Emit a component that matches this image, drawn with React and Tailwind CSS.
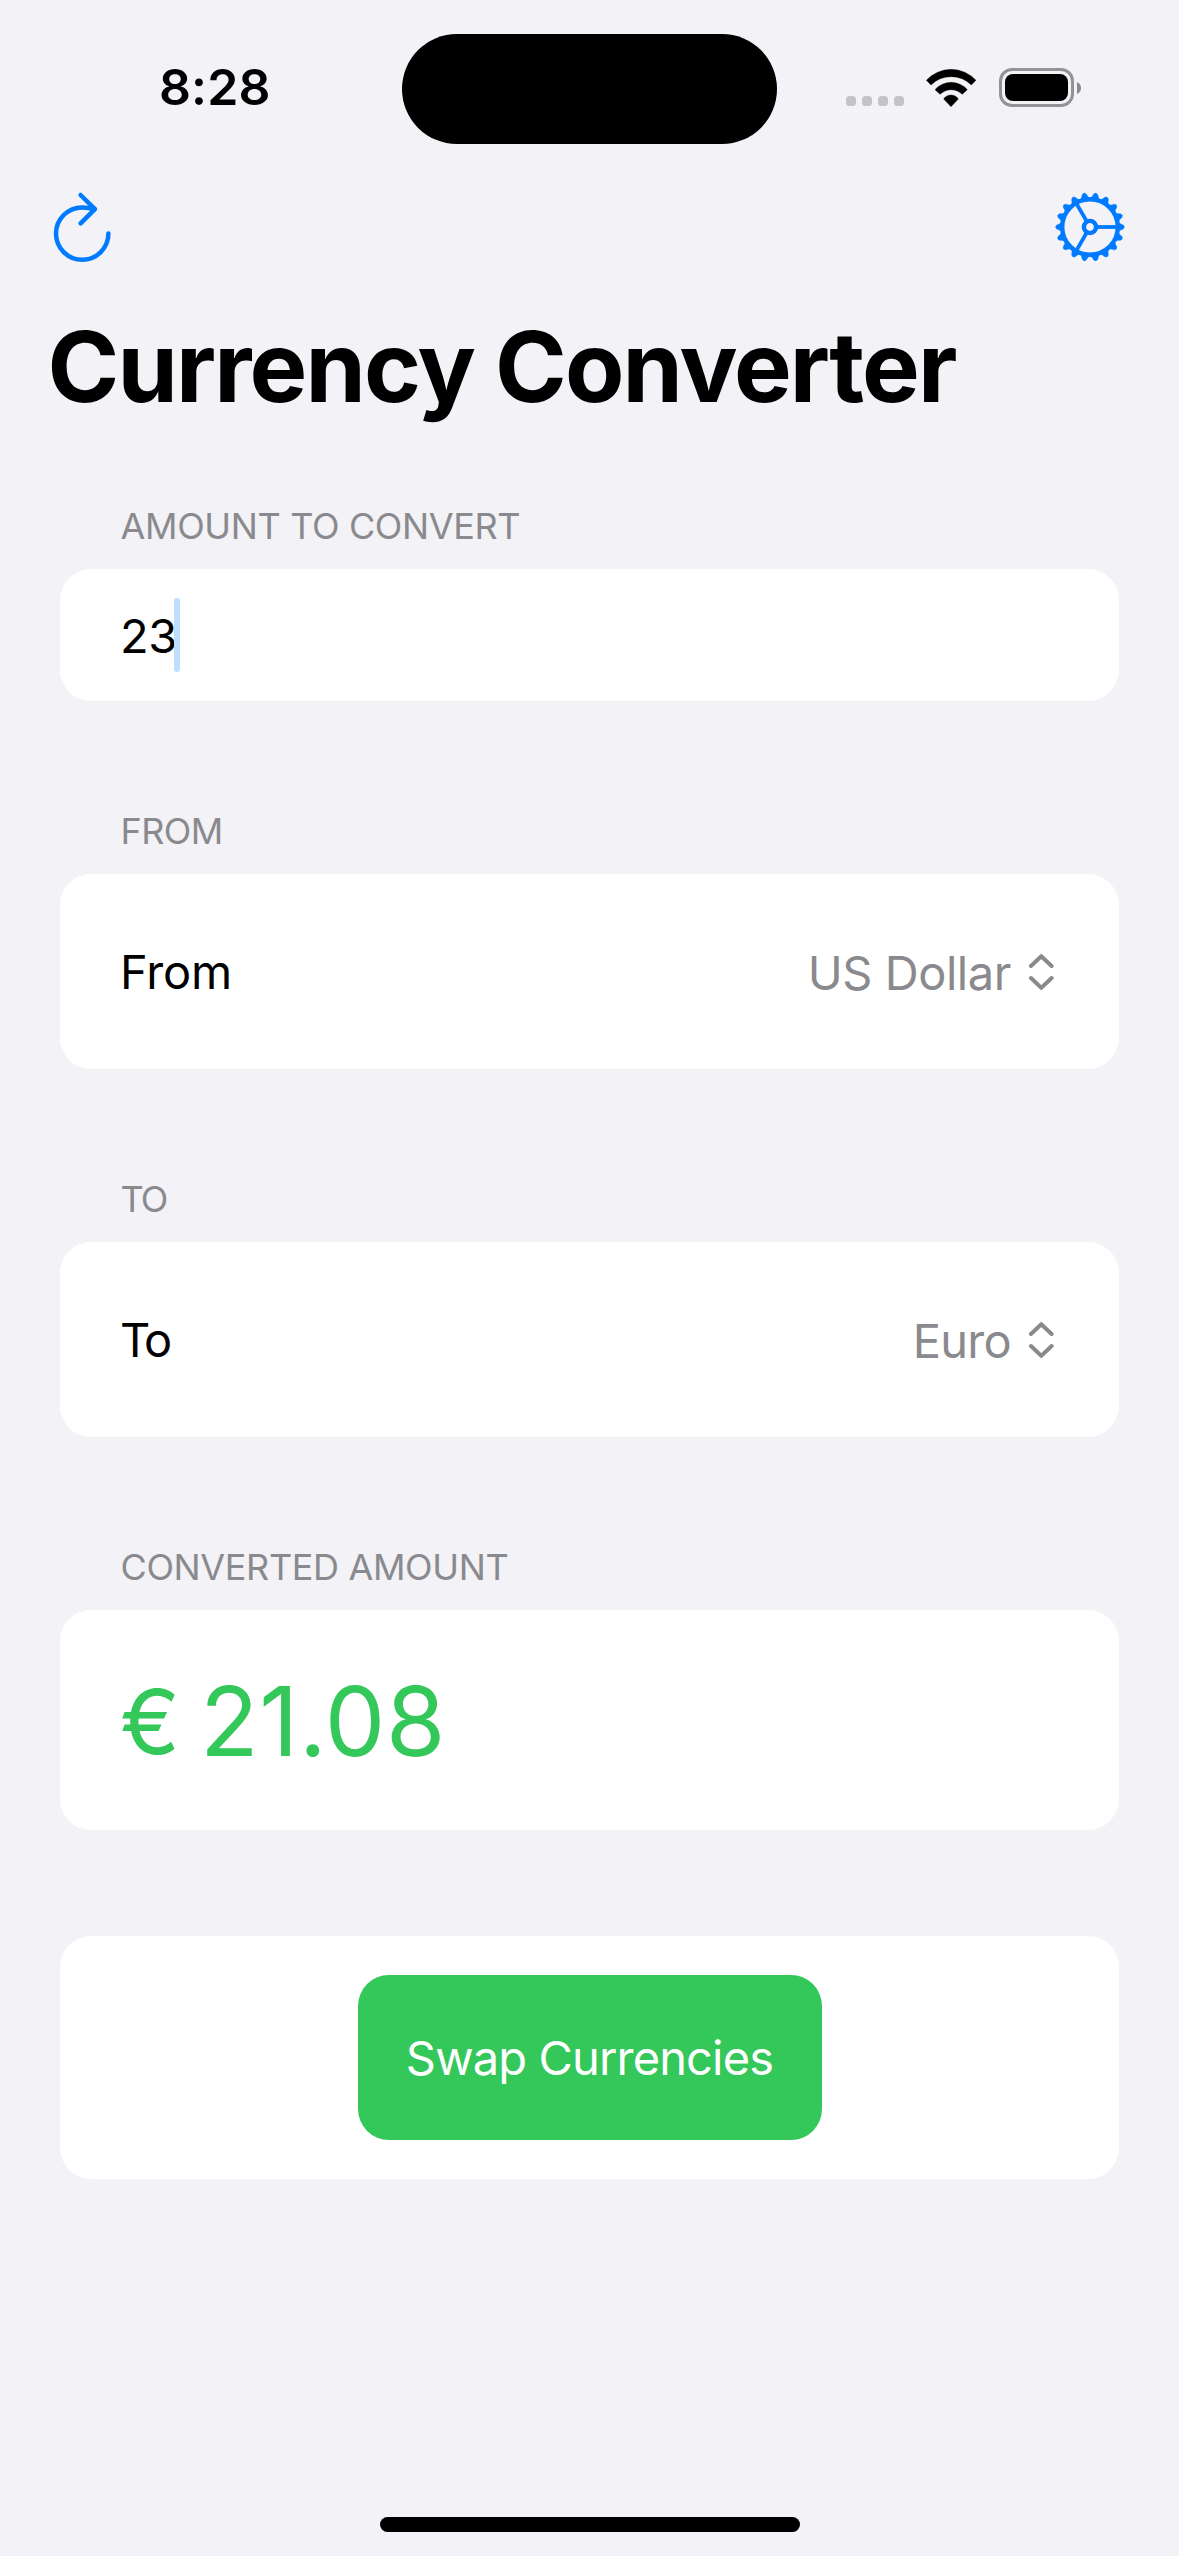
import React from 'react';

const TEETH = Array.from({ length: 18 }, (_, i) => i * 20);

function RefreshIcon() {
  return (
    <svg className="block h-[84px] w-[72px]" viewBox="48 186 72 84" fill="none" stroke="#007aff" strokeWidth="4.5" strokeLinecap="round" strokeLinejoin="round">
      <path d="M108.4 233.5A26.2 26.2 0 1 1 82.3 207.4Q88.5 207.4 94.6 209.1" />
      <path d="M80.6 195L94.9 209.2L80.6 223.3" />
    </svg>
  );
}

function GearIcon() {
  return (
    <svg className="block h-[72px] w-[72px]" viewBox="-36 -36 72 72" fill="none" stroke="#007aff">
      <circle r="27.8" strokeWidth="4.4" />
      <circle r="6.1" strokeWidth="4.4" />
      {[0, 120, 240].map((a) => (
        <path key={a} d="M7 0H27" strokeWidth="3.8" transform={`rotate(${a})`} />
      ))}
      {TEETH.map((a) => (
        <path key={a} d="M28.8 -4L33.2 -2Q35.6 0 33.2 2L28.8 4Z" fill="#007aff" strokeWidth="0.4" transform={`rotate(${a})`} />
      ))}
    </svg>
  );
}

function WifiIcon() {
  return (
    <svg className="block h-[38px] w-[50px]" viewBox="319 85 150 114" fill="#000">
      <path d="M320 119A100.6 100.6 0 0 1 469 119L455 133A85.7 85.7 0 0 0 334 133Z" stroke="#000" strokeWidth="1" strokeLinejoin="round" />
      <path d="M346 147A64.5 64.5 0 0 1 443 147L428 161A47 47 0 0 0 361 161Z" stroke="#000" strokeWidth="1" strokeLinejoin="round" />
      <path d="M372 175A26 26 0 0 1 416 175L394 198Z" stroke="#000" strokeWidth="1" strokeLinejoin="round" />
    </svg>
  );
}

function UpDownIcon() {
  return (
    <svg className="block h-[38px] w-[26px]" viewBox="1028 952 26 38" fill="none" stroke="#8a8a8e" strokeWidth="4" strokeLinecap="round" strokeLinejoin="round">
      <path d="M1031 965L1041.3 955.2L1051.6 965" />
      <path d="M1031 977L1041.3 986.9L1051.6 977" />
    </svg>
  );
}

function StatusBar() {
  return (
    <header className="flex h-[177px] items-start">
      <div className="mt-[57px] ml-[159px] w-[243px] text-[50px] leading-[60px] font-semibold tracking-[0.1px]">8:28</div>
      <div className="mt-[33.5px] h-[110.5px] w-[375px] rounded-full bg-black" />
      <div className="mt-[96px] ml-[69px] flex gap-[6px]">
        {[0, 1, 2, 3].map((i) => (
          <span key={i} className="size-[10px] rounded-[3.5px] bg-[#c4c3c8]" />
        ))}
      </div>
      <div className="mt-[68.5px] ml-[22px]">
        <WifiIcon />
      </div>
      <div className="mt-[68px] ml-[23px] flex items-center gap-[3px]">
        <div className="h-[39px] w-[75px] rounded-[13px] border-[3px] border-[#939297] p-[3px]">
          <div className="h-full rounded-[8px] bg-black" />
        </div>
        <svg className="h-3 w-1" viewBox="0 0 4 12" fill="#8b8b8f">
          <path d="M0 0Q4 2 4 6T0 12Z" />
        </svg>
      </div>
    </header>
  );
}

function SectionHeader({ children, className = '' }) {
  return (
    <h2 className={`mb-[16px] pl-[60.5px] text-[36px] leading-[54px] tracking-[-0.36px] text-[#8a8a8e] ${className}`}>{children}</h2>
  );
}

function PickerRow({ label, value, labelClass, valueClass }) {
  return (
    <div className="flex h-[195px] items-center rounded-[31px] bg-white pr-[65px] pl-[60px]">
      <span className={`text-[47px] leading-[60px] ${labelClass}`}>{label}</span>
      <span className={`mt-[3px] mr-[17px] ml-auto text-[47px] leading-[60px] text-[#8a8a8e] ${valueClass}`}>{value}</span>
      <UpDownIcon />
    </div>
  );
}

export default function App() {
  return (
    <div className="flex h-[2556px] w-[1179px] flex-col overflow-hidden bg-[#f2f2f7] font-['Inter',sans-serif] font-[370] text-black">
      <StatusBar />
      <nav className="flex h-[133px] items-start justify-between pr-[53px] pl-[48px]">
        <button className="mt-[9px]"><RefreshIcon /></button>
        <button className="mt-[14px]"><GearIcon /></button>
      </nav>
      <h1 className="pl-[47.5px] text-[97px] leading-[114px] font-bold tracking-[-1.87px] whitespace-nowrap">Currency Converter</h1>

      <main className="px-[60px] pt-[75px]">
        <section>
          <SectionHeader>AMOUNT TO CONVERT</SectionHeader>
          <div className="flex h-[132px] items-center rounded-[31px] bg-white pl-[60px]">
            <span className="mt-[2px] text-[47px] leading-[60px] tracking-[-0.4px]">23</span>
            <span className="-ml-[2.5px] h-[74px] w-[6px] rounded-full bg-[#bfdfff]" />
          </div>
        </section>

        <section className="mt-[103px]">
          <SectionHeader className="tracking-[-0.6px]!">FROM</SectionHeader>
          <PickerRow label="From" value="US Dollar" labelClass="tracking-[-0.15px]" valueClass="tracking-[-0.45px]" />
        </section>

        <section className="mt-[103px]">
          <SectionHeader className="tracking-[-2px]!">TO</SectionHeader>
          <PickerRow label="To" value="Euro" labelClass="tracking-[-2.6px]" valueClass="tracking-[-0.7px]" />
        </section>

        <section className="mt-[103px]">
          <SectionHeader>CONVERTED AMOUNT</SectionHeader>
          <div className="flex h-[220px] items-center rounded-[31px] bg-white pl-[60px] text-[#34c759]">
            <p className="mt-[4px] flex items-baseline text-[96px] leading-[120px] whitespace-pre">
              <span className="relative -top-[2px] w-[80px] text-[90px]">€ </span>
              <span className="tracking-[0.66px]">21.08</span>
            </p>
          </div>
        </section>

        <section className="mt-[106px] flex h-[243px] items-center justify-center rounded-[31px] bg-white">
          <button className="h-[165px] w-[464px] rounded-[31px] bg-[#34c759] text-[47px] leading-[60px] tracking-[-0.85px] whitespace-nowrap text-white">
            Swap Currencies
          </button>
        </section>
      </main>

      <div className="mx-auto mt-auto mb-[24px] h-[15px] w-[420px] shrink-0 rounded-full bg-black" />
    </div>
  );
}
